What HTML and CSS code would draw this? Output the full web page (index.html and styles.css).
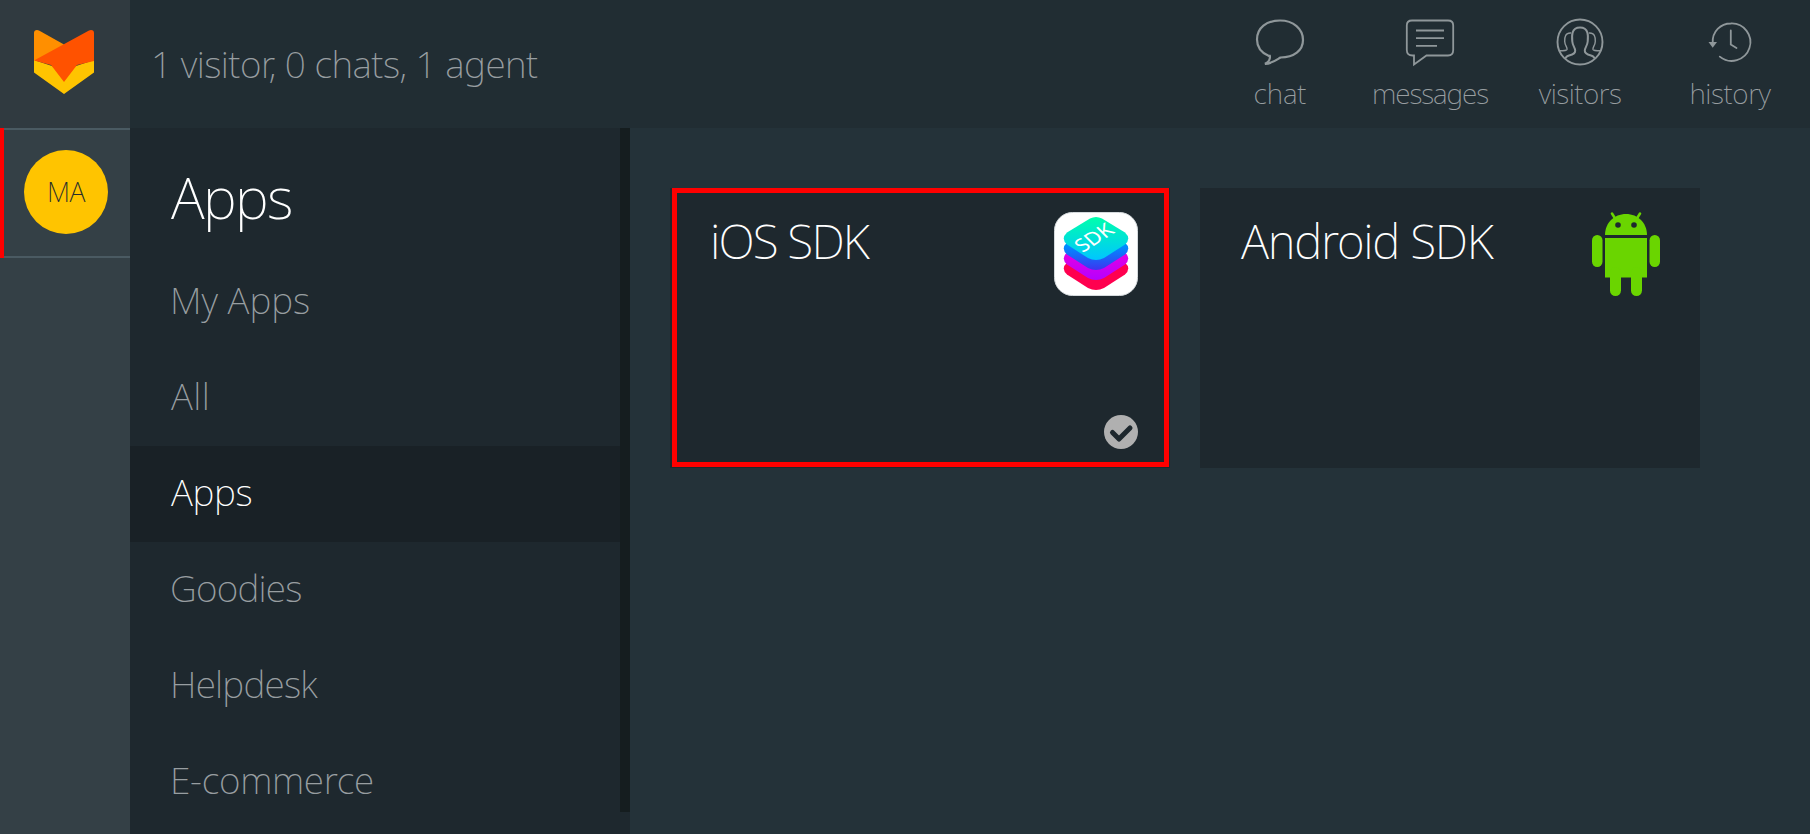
FILE: index.html
```html
<!DOCTYPE html>
<html lang="en">
<head>
<meta charset="utf-8">
<title>Apps</title>
<link rel="stylesheet" href="styles.css">
</head>
<body>
<div class="app">
  <aside class="rail">
    <div class="logo">
      <svg width="60" height="64" viewBox="0 0 60 64">
        <path fill="#ff8f00" d="M0 3Q0 0 3 0L5 .5 30 14.5 15 29 0 31Z"/>
        <path fill="#ffc400" d="M0 30 30 40 60 30V42.5L30 64 0 42.5Z"/>
        <path fill="#ff5200" d="M0 30.5 55 .5 57 0Q60 0 60 3V31L43 35 30 52 17 35Z"/>
      </svg>
    </div>
    <div class="agent"><div class="avatar">MA</div></div>
  </aside>
  <div class="main">
    <header class="topbar">
      <div class="status">1 visitor, 0 chats, 1 agent</div>
      <nav class="tools">
        <a class="tool tool-chat">
          <svg width="52" height="52" viewBox="0 0 52 52"><path stroke-width="2.2" d="M14.5 39.8C7 36.5 3 30.5 3 23.5 3 12 12.500 4.500 26 4.500S49 13 49 24c0 10.500-9 17.500-22.500 17.500-5 3-9.500 6.500-15.500 6.300 4-2 5.500-4.300 4.800-8Z"/></svg>
          <span>chat</span>
        </a>
        <a class="tool tool-messages">
          <svg width="52" height="52" viewBox="0 0 52 52"><path stroke-width="1.800" d="M8.500 39.500Q2.800 39.500 2.800 34V9.500Q2.800 4.500 8 4.500H44Q49.200 4.500 49.200 9.500V34Q49.200 39.500 44 39.500H22.500L10 48.500V39.500ZM12 14.500H40M12 22.200H40M12 29.800H33"/></svg>
          <span>messages</span>
        </a>
        <a class="tool tool-visitors">
          <svg width="52" height="52" viewBox="0 0 52 52">
            <circle stroke-width="1.900" cx="26" cy="26" r="22.500"/>
            <path stroke-width="2" d="M12 42.500Q11.500 40.500 15 39.500C19 38.500 21.500 37.500 21.200 34.500 20.900 31 18.700 30 18.300 25.500 17.800 20.500 17 11.500 26 11.500S34.200 20.500 33.700 25.500C33.300 30 31.100 31 30.800 34.500 30.500 37.500 33 38.500 37 39.500Q40.500 40.500 40 42.500"/>
            <path stroke-width="1.400" d="M17 17C11.500 16.500 10.500 21 10.700 25.500 10.900 29.500 13.500 31 13 33.500 12.700 34.800 8.500 34.800 5.500 34.800M35 17C40.500 16.500 41.500 21 41.300 25.500 41.100 29.500 38.500 31 39 33.500 39.300 34.800 43.500 34.800 46.500 34.800"/>
          </svg>
          <span>visitors</span>
        </a>
        <a class="tool tool-history">
          <svg width="52" height="52" viewBox="0 0 52 52">
            <path stroke-width="1.800" stroke-linecap="round" d="M8.700 27C8.100 15.500 16.500 7.500 26.800 7.500A18.700 18.700 0 1 1 15.800 40.600M26.800 14.500V28.500L32.500 32"/>
            <path fill="currentColor" stroke="none" d="M4.500 26H13L8.700 31.800Z"/>
          </svg>
          <span>history</span>
        </a>
      </nav>
    </header>
    <div class="body">
      <section class="sidebar">
        <div class="menu">
          <h1>Apps</h1>
          <a class="item wide">My Apps</a>
          <a class="item all">All</a>
          <a class="item active">Apps</a>
          <a class="item tight">Goodies</a>
          <a class="item tight">Helpdesk</a>
          <a class="item">E-commerce</a>
        </div>
        <div class="scrollbar"></div>
      </section>
      <main class="cards">
        <article class="card selected">
          <div class="card-head">
            <h2 class="ios">iOS SDK</h2>
            <svg width="84" height="84" viewBox="0 0 84 84">
              <defs>
                <linearGradient id="top" x1="0" y1="0" x2="0" y2="1"><stop offset="0" stop-color="#00ffac"/><stop offset="1" stop-color="#00c6ff"/></linearGradient>
                <linearGradient id="blue" x1="0" y1="0" x2="0" y2="1"><stop offset=".45" stop-color="#008cff"/><stop offset="1" stop-color="#3c35f0"/></linearGradient>
                <linearGradient id="violet" x1="0" y1="0" x2="0" y2="1"><stop offset=".4" stop-color="#e300e3"/><stop offset="1" stop-color="#b400ff"/></linearGradient>
                <path id="tile" d="M36 6.500Q42 3.500 48 6.500L71 20.500Q77.500 26.500 71 32.500L50 46Q42 50 34 46L13 32.500Q6.500 26.500 13 20.500Z"/>
              </defs>
              <rect x=".5" y=".5" width="83" height="83" rx="18" fill="#fff" stroke="#d5dadd"/>
              <use href="#tile" y="30" fill="#ff004f"/>
              <use href="#tile" y="20" fill="url(#violet)"/>
              <use href="#tile" y="10" fill="url(#blue)"/>
              <use href="#tile" fill="url(#top)"/>
              <text class="sdk" transform="matrix(.83 -.52 .68 .68 28.500 41)">SDK</text>
            </svg>
          </div>
          <svg class="check" width="34" height="34" viewBox="0 0 34 34"><circle cx="17" cy="17" r="17" fill="#b0b0b0"/><path fill="none" stroke="#1e282e" stroke-width="5" stroke-linecap="round" stroke-linejoin="round" d="M8.500 17.500 15 24 26 13"/></svg>
        </article>
        <article class="card">
          <div class="card-head">
            <h2 class="android">Android SDK</h2>
            <svg width="68" height="84" viewBox="0 0 68 84">
              <g fill="#6ad500">
                <path d="M13 23C13 11 22 2 34 2S55 11 55 23Z"/>
                <path d="M13 26H55V65.500H13Z"/>
                <rect x="0" y="23" width="10.500" height="32" rx="5.200"/>
                <rect x="57.500" y="23" width="10.500" height="32" rx="5.200"/>
                <rect x="18" y="55" width="11" height="29" rx="5.500"/>
                <rect x="39" y="55" width="11" height="29" rx="5.500"/>
              </g>
              <path stroke="#6ad500" stroke-width="2.500" stroke-linecap="round" d="M20 1.500 24 8M48 1.500 44 8"/>
              <circle cx="26" cy="13" r="2.800" fill="#1e282e"/><circle cx="42" cy="13" r="2.800" fill="#1e282e"/>
            </svg>
          </div>
        </article>
      </main>
    </div>
  </div>
</div>
</body>
</html>
```
FILE: styles.css
```css
* { box-sizing: border-box; }
body {
  margin: 0;
  font-family: "Noto Sans", "Open Sans", sans-serif;
  font-weight: 200;
  color: #989ea1;
  background: #243239;
}
svg { display: block; flex: none; }
.app { display: flex; width: 1810px; height: 834px; overflow: hidden; }

.rail { width: 130px; background: #344046; }
.logo { height: 128px; padding: 30px 34px; background: #303a40; }
.agent {
  height: 130px;
  padding: 20px 0 0 20px;
  border: solid #4a5a62;
  border-width: 2px 0;
  position: relative;
}
.agent::before {
  content: "";
  position: absolute;
  left: 0;
  top: -2px;
  width: 4px;
  height: 130px;
  background: #f00;
}
.avatar {
  width: 84px;
  height: 84px;
  margin-left: 4px;
  border-radius: 50%;
  background: #ffc400;
  color: #262d2d;
  font-size: 27px;
  line-height: 84px;
  letter-spacing: -0.5px;
  text-align: center;
}

.main { flex: 1; display: flex; flex-direction: column; }
.topbar {
  height: 128px;
  display: flex;
  justify-content: space-between;
  padding: 0 5px 0 21px;
  background: #212d33;
}
.status { font-size: 37px; line-height: 128px; letter-spacing: -0.5px; }
.tools { display: flex; }
.tool {
  width: 150px;
  padding-top: 16px;
  display: flex;
  flex-direction: column;
  align-items: center;
  font-size: 28px;
  line-height: 40px;
}
.tool svg { fill: none; stroke: #8f979a; color: #8f979a; margin-bottom: 5px; }
.tool-chat { letter-spacing: -0.1px; }
.tool-messages { letter-spacing: -1.1px; }
.tool-visitors { letter-spacing: -0.5px; }
.tool-history { letter-spacing: -0.4px; }

.body { flex: 1; display: flex; }
.sidebar { width: 500px; display: flex; background: #1e282e; }
.menu { width: 490px; }
.menu h1 {
  margin: 0;
  height: 126px;
  padding: 27px 0 0 41px;
  font-size: 57px;
  line-height: 84px;
  font-weight: 200;
  letter-spacing: -1.6px;
  color: #fff;
}
.item {
  display: block;
  height: 96px;
  padding-left: 40px;
  font-size: 37px;
  line-height: 92px;
  letter-spacing: -0.3px;
}
.item.wide { letter-spacing: 0; }
.item.all { padding-left: 41px; letter-spacing: 0.5px; }
.item.tight { letter-spacing: -0.75px; }
.item.active { padding-left: 41px; background: #192126; color: #fff; }
.scrollbar { width: 10px; height: 684px; background: #151d1f; }

.cards { display: flex; align-items: flex-start; gap: 30px; padding: 60px 40px; }
.card {
  width: 500px;
  height: 280px;
  padding: 24px 40px 0 41px;
  background: #1e282e;
}
.card.selected { position: relative; padding: 24px 32px 0 40px; }
.card.selected::after {
  content: "";
  box-sizing: border-box;
  position: absolute;
  left: 2px;
  top: 0;
  width: 497px;
  height: 279px;
  border: 5px solid #f00;
}
.card-head { display: flex; justify-content: space-between; }
.card h2 {
  margin: 0;
  font-size: 47.5px;
  line-height: 58px;
  font-weight: 200;
  color: #fff;
  white-space: nowrap;
}
.card h2.ios { letter-spacing: -1.8px; }
.card h2.android { letter-spacing: -1.25px; }
.sdk { font-size: 21px; font-weight: 400; fill: #fff; }
.check { margin: 119px 0 0 auto; }
```
